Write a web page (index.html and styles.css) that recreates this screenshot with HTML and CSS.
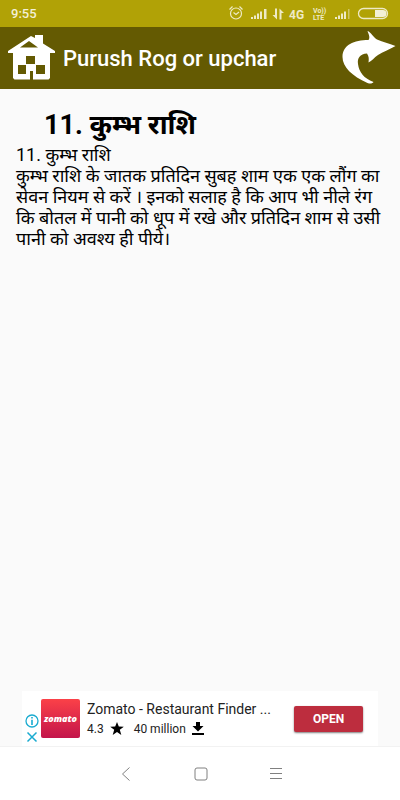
FILE: index.html
```html
<!DOCTYPE html>
<html lang="hi">
<head>
    <meta charset="UTF-8">
    <meta name="viewport" content="width=device-width, initial-scale=1.0">
    <title>Purush Rog or upchar</title>
    <link rel="stylesheet" href="styles.css">
</head>
<body>
    <div class="status-bar">
        <span class="clock">9:55</span>
        <svg class="status-icons" width="162" height="18" viewBox="0 0 162 18" aria-hidden="true">
            <!-- alarm -->
            <g fill="none" stroke="#eeeac6" stroke-width="1.2">
                <circle cx="8" cy="8.500" r="5.500"/>
                <path d="M5.500 7.500l2.500 2 3-2.500M1.500 4.500l3-3M14.500 4.500l-3-3"/>
            </g>
            <!-- signal -->
            <path fill="#eeeac6" d="M23 12h2v2h-2zM26 10.500h2V14h-2zM29 8.500h2V14h-2zM32 6.500h2V14h-2zM36 4h2.500v10H36z"/>
            <!-- data arrows -->
            <path fill="#eeeac6" d="M47 3.500h2v11l-4.500-4.500H47zM51.500 14.500v-11L56 8h-2.500v6.500z"/>
            <text class="net" x="61" y="14">4G</text>
            <text class="volte" x="85" y="8">Vo))</text>
            <text class="volte" x="85" y="15">LTE</text>
            <path fill="#eeeac6" d="M107 12h2v2h-2zM110 10.500h2V14h-2zM113 8.500h2V14h-2zM116 6.500h2V14h-2z"/>
            <path fill="#d0c666" d="M120 4h1.500v10H120z"/>
            <!-- battery -->
            <rect x="130.500" y="3.500" width="29" height="10" rx="5" fill="none" stroke="#eeeac6" stroke-width="1.300"/>
            <path fill="#f3f0d6" d="M147 5h8a3.500 3.500 0 0 1 0 7h-8z"/>
        </svg>
    </div>

    <header>
        <a class="icon-link" href="#home" aria-label="Home">
            <svg width="48" height="46" viewBox="0 0 48 46">
                <path fill="#fff" fill-rule="evenodd" d="M23 1l4 2V0h8v8.500L47 16v2h-5v25l-1.500 1.500H25V36h-3v8.500H6.500L5 43V18H0v-2zM21 6l-9 6.500h18zM18 21v8h9v-8zM10 30v9h8v-9zM28 30v9h9v-9z"/>
            </svg>
        </a>
        <h1>Purush Rog or upchar</h1>
        <a class="icon-link" href="#next" aria-label="Next">
            <svg width="54" height="56" viewBox="0 0 54 56">
                <path fill="#fff" d="M25.500 1C29 2 31 7 35 9.500c6 3 12 3.500 18.500 6.500C47 19.500 41 22 36 25c-4 2.500-6 6-9.500 7.500.5-3.500.5-6-1.500-9C18 24 15 28 16 34c1 8 6 14.500 15.500 18-1 1.500-3 2-6 1C10 46 .5 37 .5 27 .5 15 12 10 26.500 10 28.500 7.500 26.500 4 25.500 1z"/>
            </svg>
        </a>
    </header>

    <main>
        <h2>11. कुम्भ राशि</h2>
        <p>11. कुम्भ राशि</p>
        <p>कुम्भ राशि के जातक प्रतिदिन सुबह शाम एक एक लौंग का सेवन नियम से करें । इनको सलाह है कि आप भी नीले रंग कि बोतल में पानी को धूप में रखे और प्रतिदिन शाम से उसी पानी को अवश्य ही पीये।</p>
    </main>

    <aside class="ad">
        <div class="ad-controls">
            <button type="button" aria-label="Ad info">
                <svg width="14" height="14" viewBox="0 0 14 14">
                    <circle cx="7" cy="7" r="6" fill="none" stroke="#1aabd0" stroke-width="1.300"/>
                    <path fill="#1aabd0" d="M6.200 3h1.600v1.600H6.200zM6.200 5.800h1.600V11H6.200z"/>
                </svg>
            </button>
            <button type="button" aria-label="Close ad">
                <svg width="14" height="12" viewBox="0 0 14 12">
                    <path d="M2.500 1.500l9 9M11.500 1.500l-9 9" fill="none" stroke="#1aabd0" stroke-width="1.500"/>
                </svg>
            </button>
        </div>
        <div class="ad-logo">zomato</div>
        <div class="ad-text">
            <div class="ad-title">Zomato - Restaurant Finder ...</div>
            <div class="ad-stats">
                <span>4.3</span>
                <svg class="star" width="14" height="13" viewBox="0 0 14 13"><path d="M7 0l1.800 4.500 5 .2-4 3.100L11.300 13 7 10.100 2.700 13l1.500-5.200-4-3.100 5-.2z"/></svg>
                <span>40 million</span>
                <svg width="12" height="13" viewBox="0 0 12 13"><path d="M4 0h4v4h3.500L6 9.500.5 4H4zM0 11h12v2H0z"/></svg>
            </div>
        </div>
        <button type="button" class="open-btn">OPEN</button>
    </aside>

    <nav>
        <button type="button" aria-label="Back">
            <svg width="14" height="14" viewBox="0 0 14 14"><path d="M10.500 .5L3.500 7l7 6.500"/></svg>
        </button>
        <button type="button" aria-label="Home screen">
            <svg width="14" height="14" viewBox="0 0 14 14"><rect x="1" y="1" width="12" height="12" rx="2"/></svg>
        </button>
        <button type="button" aria-label="Recent apps">
            <svg width="14" height="14" viewBox="0 0 14 14"><path d="M1 1.500h12M1 6.500h12M1 11.500h12"/></svg>
        </button>
    </nav>
</body>
</html>
```

FILE: styles.css
```css
:root {
    --status: #b1a206;
    --bar: #645a02;
    --page: #fafafa;
    --accent: #bd2d3e;
}
* {
    box-sizing: border-box;
}
body {
    margin: 0;
    min-height: 100vh;
    display: flex;
    flex-direction: column;
    background: var(--page);
    color: #000;
    font-family: Roboto, "Noto Sans", sans-serif;
}
button {
    padding: 0;
    border: none;
    background: none;
    cursor: pointer;
}
svg {
    display: block;
}
.status-bar {
    display: flex;
    align-items: center;
    justify-content: space-between;
    height: 27px;
    padding: 0 10px 0 11px;
    background: var(--status);
}
.clock {
    color: #f3f0d6;
    font-size: 13px;
    font-weight: 500;
}
.net {
    fill: #eeeac6;
    font-size: 12px;
    font-weight: 700;
}
.volte {
    fill: #eeeac6;
    font-size: 7px;
    font-weight: 700;
}
header {
    display: flex;
    align-items: center;
    height: 62px;
    padding: 0 4px 0 8px;
    background: var(--bar);
}
header h1 {
    flex: 1;
    margin: 2px 0 0 7px;
    color: #fff;
    font-size: 22px;
    font-weight: 500;
    line-height: 28px;
    white-space: nowrap;
}
main {
    flex: 1;
    padding: 19px 16px;
}
main h2 {
    margin: 0 0 2px 28px;
    font-size: 27px;
    font-weight: 700;
    line-height: 34px;
}
main p {
    margin: 0;
    font-size: 18px;
    line-height: 21px;
}
.ad {
    display: flex;
    align-items: center;
    height: 55px;
    margin: 0 22px;
    padding: 0 15px 0 3px;
    background: #fff;
}
.ad-controls {
    display: flex;
    flex-direction: column;
    gap: 3px;
    padding-top: 20px;
}
.ad-logo {
    display: flex;
    align-items: center;
    justify-content: center;
    width: 39px;
    height: 39px;
    margin: 0 7px 0 2px;
    border-radius: 2px;
    background: linear-gradient(#fb4148, #c3154b);
    color: #fff;
    font-family: "Open Sans", sans-serif;
    font-size: 9px;
    font-style: italic;
    font-weight: 800;
}
.ad-text {
    flex: 1;
    color: #222;
    white-space: nowrap;
}
.ad-title {
    font-size: 14px;
    line-height: 20px;
}
.ad-stats {
    display: flex;
    align-items: center;
    font-size: 12px;
    line-height: 20px;
}
.ad-stats svg {
    margin-left: 6px;
    fill: #000;
}
.ad-stats .star {
    margin-right: 10px;
}
.open-btn {
    width: 69px;
    height: 26px;
    border-radius: 2px;
    background: var(--accent);
    box-shadow: 0 1px 2px rgba(0, 0, 0, 0.5);
    color: #fff;
    font-family: inherit;
    font-size: 12px;
    font-weight: 700;
}
nav {
    display: flex;
    align-items: center;
    justify-content: center;
    gap: 61px;
    height: 54px;
    padding-left: 2px;
    border-top: 1px solid #f2f2f2;
    background: #fff;
}
nav svg {
    fill: none;
    stroke: #808080;
    stroke-width: 1;
}
```
